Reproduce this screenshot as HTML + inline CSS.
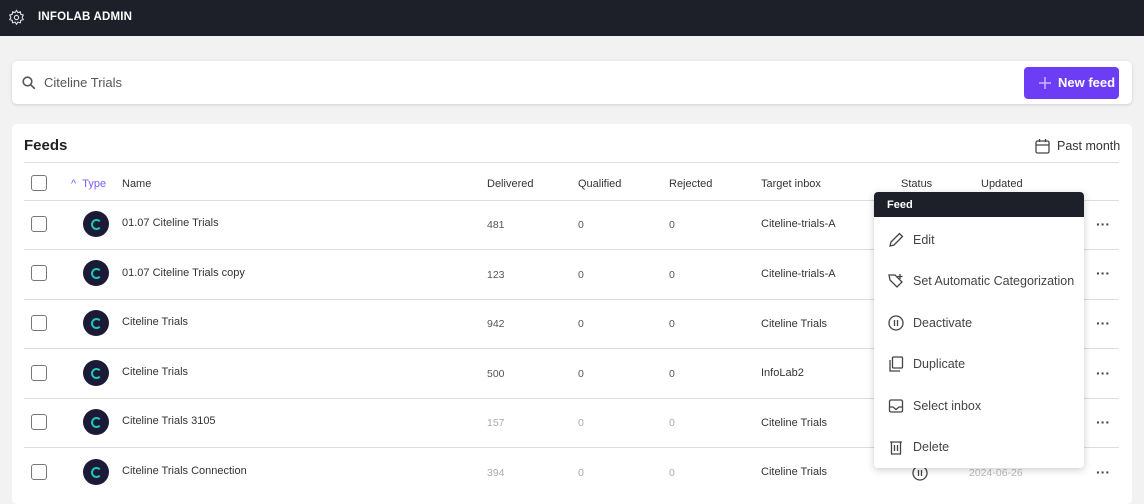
<!DOCTYPE html>
<html><head><style>
*{box-sizing:border-box;margin:0;padding:0}
body{width:1144px;height:498px;overflow:hidden;background:#f2f2f2;font-family:"Liberation Sans",sans-serif;color:#333;position:relative}
.top{position:absolute;left:0;top:0;width:1144px;height:36px;background:#1e2029;color:#fff}
.top .t{position:absolute;left:38px;top:11px;font-size:11.5px;font-weight:bold;letter-spacing:.2px}
.search{position:absolute;left:12px;top:61px;width:1120px;height:43px;background:#fff;border-radius:5px;box-shadow:0 1px 3px rgba(0,0,0,.15)}
.search .q{position:absolute;left:32px;top:14px;font-size:13px;color:#555}
.btn{position:absolute;left:1012px;top:6px;width:95px;height:32px;background:#6d3df5;border-radius:4px;color:#fff;font-size:13px;font-weight:bold}
.btn span{position:absolute;left:34px;top:8px}
.card{position:absolute;left:12px;top:124px;width:1120px;height:380px;background:#fff;border-radius:5px}
.abs{position:absolute;white-space:nowrap}
.line{position:absolute;left:24px;width:1095px;height:1px;background:#ddd}
.h{font-size:11px;color:#333;top:178px}
.cb{position:absolute;left:31px;width:16px;height:16px;border:1.5px solid #777;border-radius:3px;background:#fff}
.ic{position:absolute;left:83px;width:26px;height:26px;border-radius:50%;background:#1b1b38}
.ic::after{content:"";position:absolute;left:8px;top:8px;width:7px;height:7px;border:2px solid #1fc7b4;border-right-color:transparent;border-radius:50%}
.c{font-size:11px;color:#333}
.d{font-size:10.5px;color:#555}
.dots{position:absolute;left:1096px;font-size:14px;font-weight:bold;color:#444}
.menu{position:absolute;left:874px;top:192px;width:210px;height:276px;background:#fff;border-radius:4px;box-shadow:0 2px 8px rgba(0,0,0,.2);overflow:hidden}
.menu .mh{height:25px;background:#1e2029;color:#fff;font-size:11px;font-weight:bold;padding:7px 0 0 13px}
.mi{position:absolute;left:39px;font-size:12.5px;color:#444}
.mic{position:absolute;left:14px}
</style></head><body>
<div class="top">
<svg class="abs" style="left:8px;top:9px" width="17" height="17" viewBox="0 0 24 24" fill="none" stroke="#ddd" stroke-width="1.6"><circle cx="12" cy="12" r="3"/><path d="M12 2l2 3 3.5-1 .5 3.5 3.5 1-1.5 3.5 1.5 3-3.5 1-.5 3.5-3.5-1-2 3-2-3-3.5 1-.5-3.5-3.5-1 1.5-3-1.5-3.5 3.5-1 .5-3.5 3.5 1z"/></svg>
<div class="t">INFOLAB ADMIN</div></div>
<div class="search">
<svg class="abs" style="left:10px;top:15px" width="14" height="14" viewBox="0 0 14 14" fill="none" stroke="#555" stroke-width="1.6"><circle cx="5.5" cy="5.5" r="4.3"/><path d="M8.8 8.8l4 4"/></svg>
<div class="q">Citeline Trials</div>
<div class="btn"><svg class="abs" style="left:15px;top:10px" width="12" height="12" viewBox="0 0 12 12" stroke="#c9b8ff" stroke-width="1.5"><path d="M6 0v12M0 6h12"/></svg><span>New feed</span></div>
</div>
<div class="card"></div>
<div class="abs" style="left:24px;top:137px;font-size:15px;font-weight:bold;color:#222">Feeds</div>
<svg class="abs" style="left:1035px;top:138px" width="15" height="16" viewBox="0 0 15 16" fill="none" stroke="#444" stroke-width="1.3"><rect x="1" y="3" width="13" height="12" rx="1.5"/><path d="M1 7h13M4.5 1v3M10.5 1v3"/></svg>
<div class="abs" style="left:1057px;top:139px;font-size:12.5px;color:#333">Past month</div>
<div class="line" style="top:162px"></div>
<div class="cb" style="top:175px"></div>
<div class="abs h" style="left:71px;color:#7b5cf5">^ &nbsp;Type</div>
<div class="abs h" style="left:122px">Name</div>
<div class="abs h" style="left:487px">Delivered</div>
<div class="abs h" style="left:578px">Qualified</div>
<div class="abs h" style="left:669px">Rejected</div>
<div class="abs h" style="left:761px">Target inbox</div>
<div class="abs h" style="left:901px">Status</div>
<div class="abs h" style="left:981px">Updated</div>
<div class="line" style="top:200px"></div>

<div class="cb" style="top:216px"></div><div class="ic" style="top:211px"></div><div class="abs c" style="left:122px;top:217px">01.07 Citeline Trials</div><div class="abs d" style="left:487px;top:219px">481</div><div class="abs d" style="left:578px;top:219px">0</div><div class="abs d" style="left:669px;top:219px">0</div><div class="abs c" style="left:761px;top:218px">Citeline-trials-A</div><div class="dots" style="top:216px">···</div>
<div class="line" style="top:249px"></div>
<div class="cb" style="top:265px"></div><div class="ic" style="top:260px"></div><div class="abs c" style="left:122px;top:267px">01.07 Citeline Trials copy</div><div class="abs d" style="left:487px;top:269px">123</div><div class="abs d" style="left:578px;top:269px">0</div><div class="abs d" style="left:669px;top:269px">0</div><div class="abs c" style="left:761px;top:268px">Citeline-trials-A</div><div class="dots" style="top:265px">···</div>
<div class="line" style="top:299px"></div>
<div class="cb" style="top:315px"></div><div class="ic" style="top:310px"></div><div class="abs c" style="left:122px;top:316px">Citeline Trials</div><div class="abs d" style="left:487px;top:318px">942</div><div class="abs d" style="left:578px;top:318px">0</div><div class="abs d" style="left:669px;top:318px">0</div><div class="abs c" style="left:761px;top:318px">Citeline Trials</div><div class="dots" style="top:315px">···</div>
<div class="line" style="top:348px"></div>
<div class="cb" style="top:365px"></div><div class="ic" style="top:360px"></div><div class="abs c" style="left:122px;top:366px">Citeline Trials</div><div class="abs d" style="left:487px;top:368px">500</div><div class="abs d" style="left:578px;top:368px">0</div><div class="abs d" style="left:669px;top:368px">0</div><div class="abs c" style="left:761px;top:367px">InfoLab2</div><div class="dots" style="top:365px">···</div>
<div class="line" style="top:398px"></div>
<div class="cb" style="top:414px"></div><div class="ic" style="top:409px"></div><div class="abs c" style="left:122px;top:415px">Citeline Trials 3105</div><div class="abs d" style="left:487px;top:417px;color:#aaa">157</div><div class="abs d" style="left:578px;top:417px;color:#aaa">0</div><div class="abs d" style="left:669px;top:417px;color:#aaa">0</div><div class="abs c" style="left:761px;top:417px">Citeline Trials</div><div class="dots" style="top:414px">···</div>
<div class="line" style="top:447px"></div>
<div class="cb" style="top:464px"></div><div class="ic" style="top:459px"></div><div class="abs c" style="left:122px;top:465px">Citeline Trials Connection</div><div class="abs d" style="left:487px;top:467px;color:#aaa">394</div><div class="abs d" style="left:578px;top:467px;color:#aaa">0</div><div class="abs d" style="left:669px;top:467px;color:#aaa">0</div><div class="abs c" style="left:761px;top:466px">Citeline Trials</div><div class="abs d" style="left:969px;top:467px;color:#bbb">2024-06-26</div><div class="dots" style="top:464px">···</div>
<svg class="abs" style="left:912px;top:465px" width="16" height="16" viewBox="0 0 16 16" fill="none" stroke="#444" stroke-width="1.3"><circle cx="8" cy="8" r="7"/><path d="M6.5 5v6M9.5 5v6"/></svg>

<div class="menu"><div class="mh">Feed</div>
<svg class="mic" style="top:40px" width="16" height="16" viewBox="0 0 16 16" fill="none" stroke="#444" stroke-width="1.3"><path d="M2 14l1-4 8.5-8.5 3 3L6 13z"/></svg><div class="mi" style="top:41px">Edit</div>
<svg class="mic" style="top:81px" width="16" height="16" viewBox="0 0 16 16" fill="none" stroke="#444" stroke-width="1.3"><path d="M1 2h6l7 7-5 5-7-7zM12 1v5M9.5 3.5h5"/></svg><div class="mi" style="top:82px">Set Automatic Categorization</div>
<svg class="mic" style="top:123px" width="16" height="16" viewBox="0 0 16 16" fill="none" stroke="#444" stroke-width="1.3"><circle cx="8" cy="8" r="7"/><path d="M6.5 5v6M9.5 5v6"/></svg><div class="mi" style="top:124px">Deactivate</div>
<svg class="mic" style="top:164px" width="16" height="16" viewBox="0 0 16 16" fill="none" stroke="#444" stroke-width="1.3"><rect x="4.5" y="1" width="10" height="11" rx="1"/><path d="M2 4v11h10"/></svg><div class="mi" style="top:165px">Duplicate</div>
<svg class="mic" style="top:206px" width="16" height="16" viewBox="0 0 16 16" fill="none" stroke="#444" stroke-width="1.3"><rect x="1.5" y="2" width="13" height="12" rx="1.5"/><path d="M1.5 9h3.5l3 2.5 3-2.5h3.5"/></svg><div class="mi" style="top:207px">Select inbox</div>
<svg class="mic" style="top:247px" width="16" height="16" viewBox="0 0 16 16" fill="none" stroke="#444" stroke-width="1.3"><path d="M2 3h12M3.5 3v12h9V3M6.5 6v6M9.5 6v6"/></svg><div class="mi" style="top:248px">Delete</div>
</div>
</body></html>
